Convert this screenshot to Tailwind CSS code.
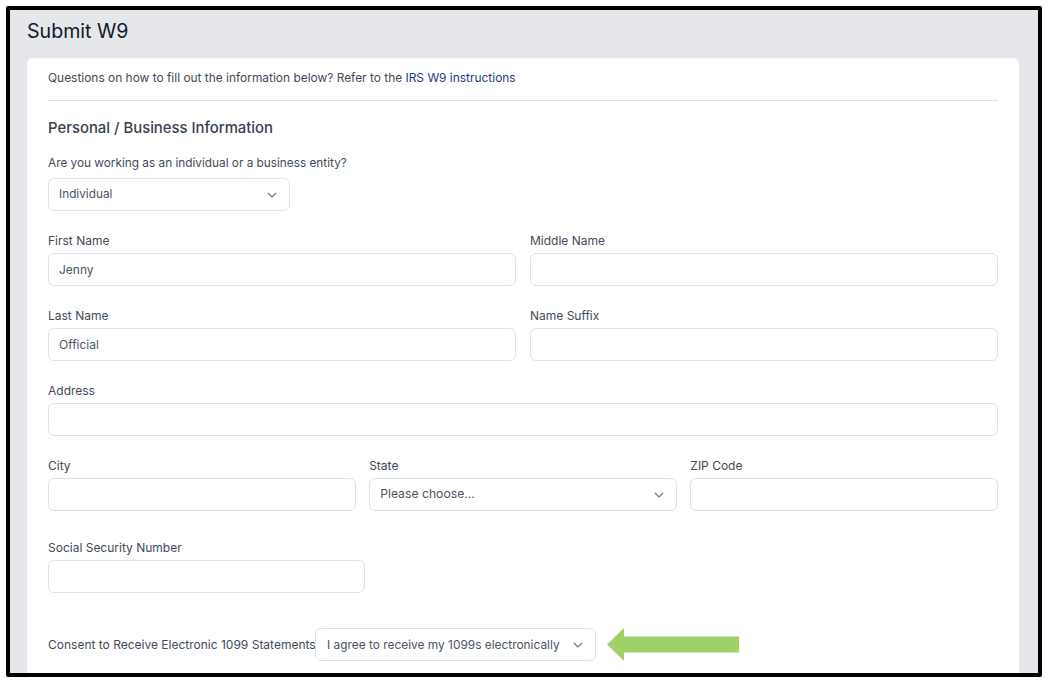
<!DOCTYPE html>
<html lang="en">
<head>
  <meta charset="UTF-8">
  <title>Submit W9</title>
  <script src="https://cdn.jsdelivr.net/npm/@tailwindcss/browser@4"></script>
</head>
<body class="bg-white font-['Inter',sans-serif]">
  <div class="ml-[6px] mt-[6px] w-[1036px] h-[671px] border-[4px] border-black rounded-[2px] bg-[#e5e7eb] overflow-hidden pl-[17px] pr-[19px]">
    <h1 class="h-[48px] pt-[6px] text-[19.6px] leading-[30px] text-[#111827]">Submit W9</h1>
    <main class="bg-white rounded-t-[6px] h-[640px] px-[21px] text-[12px] text-[#414b59]">
      <p class="h-[43px] pt-[11px] leading-[18px] text-[11.93px] border-b border-[#dfe1e6]">Questions on how to fill out the information below? Refer to the <a class="text-[#1e3a8a]" href="#">IRS W9 instructions</a></p>

      <h2 class="mt-[17px] text-[14.87px] leading-[20px] font-medium text-[#374151]">Personal / Business Information</h2>

      <label class="block mt-[16px] leading-[18px] text-[11.8px]">Are you working as an individual or a business entity?</label>
      <div class="mt-[6px] w-[242px] h-[33px] flex items-center justify-between px-[10px] bg-white border border-[#e0e2e6] rounded-[6px] text-[11.8px] text-[#4b5563]">
        <span>Individual</span>
        <svg class="w-[12px] h-[12px] mr-[1px]" viewBox="0 0 12 12" fill="none" stroke="#6b7280" stroke-width="1.2"><path d="M2 4l4 4 4-4"/></svg>
      </div>

      <div class="mt-[21px] grid grid-cols-2 gap-x-[14px]">
        <div>
          <label class="block leading-[18px]">First Name</label>
          <input class="mt-[3px] block w-full h-[33px] px-[10px] border border-[#e0e2e6] rounded-[6px] text-[#4b5563]" value="Jenny">
        </div>
        <div>
          <label class="block leading-[18px]">Middle Name</label>
          <input class="mt-[3px] block w-full h-[33px] px-[10px] border border-[#e0e2e6] rounded-[6px]">
        </div>
      </div>

      <div class="mt-[21px] grid grid-cols-2 gap-x-[14px]">
        <div>
          <label class="block leading-[18px]">Last Name</label>
          <input class="mt-[3px] block w-full h-[33px] px-[10px] border border-[#e0e2e6] rounded-[6px] text-[#4b5563]" value="Official">
        </div>
        <div>
          <label class="block leading-[18px]">Name Suffix</label>
          <input class="mt-[3px] block w-full h-[33px] px-[10px] border border-[#e0e2e6] rounded-[6px]">
        </div>
      </div>

      <div class="mt-[21px]">
        <label class="block leading-[18px]">Address</label>
        <input class="mt-[3px] block w-full h-[33px] px-[10px] border border-[#e0e2e6] rounded-[6px]">
      </div>

      <div class="mt-[21px] grid grid-cols-3 gap-x-[13.5px]">
        <div>
          <label class="block leading-[18px]">City</label>
          <input class="mt-[3px] block w-full h-[33px] px-[10px] border border-[#e0e2e6] rounded-[6px]">
        </div>
        <div>
          <label class="block leading-[18px]">State</label>
          <div class="mt-[3px] h-[33px] flex items-center justify-between px-[10px] border border-[#e0e2e6] rounded-[6px] text-[12.2px] text-[#4b5563]">
            <span>Please choose...</span>
            <svg class="w-[12px] h-[12px] mr-[1px]" viewBox="0 0 12 12" fill="none" stroke="#6b7280" stroke-width="1.2"><path d="M2 4l4 4 4-4"/></svg>
          </div>
        </div>
        <div>
          <label class="block leading-[18px]">ZIP Code</label>
          <input class="mt-[3px] block w-full h-[33px] px-[10px] border border-[#e0e2e6] rounded-[6px]">
        </div>
      </div>

      <div class="mt-[28px] w-[317px]">
        <label class="block leading-[18px]">Social Security Number</label>
        <input class="mt-[3px] block w-full h-[33px] px-[10px] border border-[#e0e2e6] rounded-[6px]">
      </div>

      <div class="mt-[35px] flex items-center">
        <span class="w-[267px] whitespace-nowrap">Consent to Receive Electronic 1099 Statements</span>
        <div class="w-[281px] h-[33px] flex items-center justify-between px-[11px] border border-[#e0e2e6] rounded-[6px] text-[11.9px] text-[#4b5563]">
          <span class="whitespace-nowrap">I agree to receive my 1099s electronically</span>
          <svg class="w-[12px] h-[12px]" viewBox="0 0 12 12" fill="none" stroke="#6b7280" stroke-width="1.2"><path d="M2 4l4 4 4-4"/></svg>
        </div>
        <svg class="ml-[11px] w-[132px] h-[33px]" viewBox="0 0 132 33"><path d="M0 16.5L17 0V8.5H132V24.5H17V33Z" fill="#a0d168"/></svg>
      </div>
    </main>
  </div>
</body>
</html>
